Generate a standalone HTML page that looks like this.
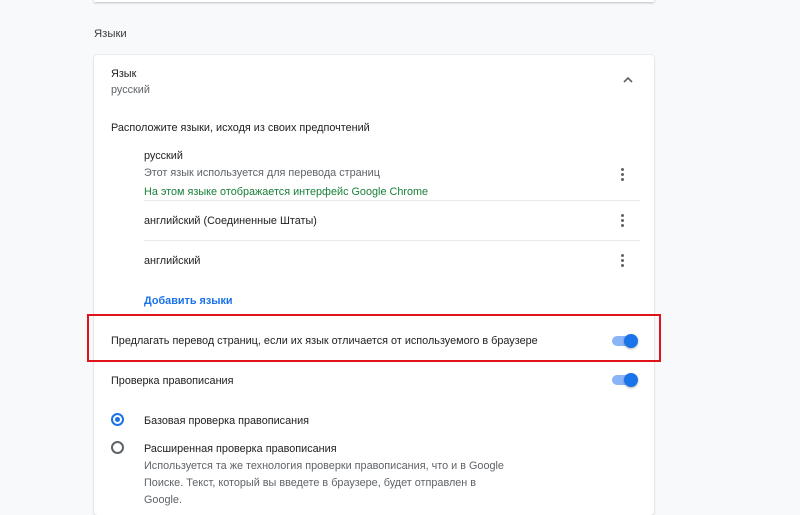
<!DOCTYPE html>
<html><head><meta charset="utf-8"><style>
*{margin:0;padding:0;box-sizing:border-box}
body{width:800px;height:496px;overflow:hidden;background:#f8f9fa;font-family:"Liberation Sans",sans-serif;font-size:10.85px;color:#202124;position:relative}
.a{position:absolute;white-space:nowrap}
.g{color:#5f6368}
.card{position:absolute;left:94px;top:55px;width:560px;height:460px;background:#fff;border-radius:3px;box-shadow:0 0 1px rgba(60,64,67,.3),0 1px 2px rgba(60,64,67,.15)}
.top{position:absolute;left:94px;top:-10px;width:560px;height:12px;background:#fff;box-shadow:0 1px 2px rgba(60,64,67,.3)}
.sep{position:absolute;left:144px;width:496px;height:1px;background:#e8eaed}
.dots{position:absolute;left:621px;width:3px}
.dots i{display:block;width:3px;height:3px;border-radius:50%;background:#5f6368;margin-bottom:2px}
.tg{position:absolute;left:612px;width:26px;height:14px}
.tg .t{position:absolute;left:0;top:2px;width:24px;height:10px;border-radius:5px;background:#8ab4f8}
.tg .k{position:absolute;left:12px;top:0;width:14px;height:14px;border-radius:50%;background:#1a73e8;box-shadow:0 1px 2px rgba(0,0,0,.3)}
</style></head><body>
<div class="top"></div>
<div class="a" style="left:94px;top:28px;font-size:11.3px;color:#3c4043">Языки</div>
<div class="card"></div>
<div class="a" style="left:111px;top:68px">Язык</div>
<div class="a g" style="left:111px;top:84px">русский</div>
<svg class="a" style="left:622px;top:76px" width="12" height="8"><path d="M2 6 L6 2 L10 6" stroke="#5f6368" stroke-width="1.6" fill="none"/></svg>
<div class="a" style="left:111px;top:122px">Расположите языки, исходя из своих предпочтений</div>
<div class="a" style="left:144px;top:150px">русский</div>
<div class="a g" style="left:144px;top:167px">Этот язык используется для перевода страниц</div>
<div class="a" style="left:144px;top:186px;color:#188038">На этом языке отображается интерфейс Google Chrome</div>
<div class="dots" style="top:168px"><i></i><i></i><i></i></div>
<div class="sep" style="top:200px"></div>
<div class="a" style="left:144px;top:215px">английский (Соединенные Штаты)</div>
<div class="dots" style="top:214px"><i></i><i></i><i></i></div>
<div class="sep" style="top:240px"></div>
<div class="a" style="left:144px;top:255px">английский</div>
<div class="dots" style="top:254px"><i></i><i></i><i></i></div>
<div class="a" style="left:144px;top:295px;color:#1a73e8;font-weight:bold">Добавить языки</div>
<div class="a" style="left:87px;top:314px;width:574px;height:48px;border:2px solid #e0121b"></div>
<div class="a" style="left:111px;top:335px">Предлагать перевод страниц, если их язык отличается от используемого в браузере</div>
<div class="tg" style="top:334px"><div class="t"></div><div class="k"></div></div>
<div class="a" style="left:111px;top:375px">Проверка правописания</div>
<div class="tg" style="top:373px"><div class="t"></div><div class="k"></div></div>
<div class="a" style="left:111px;top:413px;width:13px;height:13px;border:2px solid #1a73e8;border-radius:50%"><div style="position:absolute;left:2px;top:2px;width:5px;height:5px;border-radius:50%;background:#1a73e8"></div></div>
<div class="a" style="left:144px;top:415px">Базовая проверка правописания</div>
<div class="a" style="left:111px;top:441px;width:13px;height:13px;border:2px solid #5f6368;border-radius:50%"></div>
<div class="a" style="left:144px;top:443px">Расширенная проверка правописания</div>
<div class="a g" style="left:144px;top:460px">Используется та же технология проверки правописания, что и в Google</div>
<div class="a g" style="left:144px;top:477px">Поиске. Текст, который вы введете в браузере, будет отправлен в</div>
<div class="a g" style="left:144px;top:494px">Google.</div>
</body></html>
